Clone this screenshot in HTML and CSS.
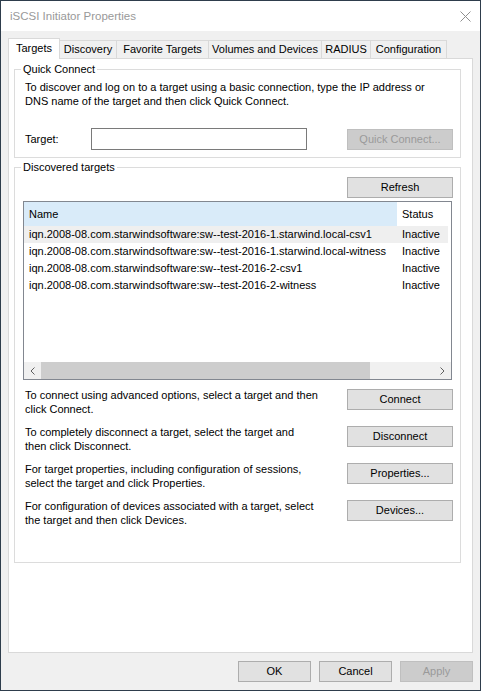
FILE: index.html
```html
<!DOCTYPE html>
<html>
<head>
<meta charset="utf-8">
<title>iSCSI Initiator Properties</title>
<link rel="stylesheet" href="styles.css">
</head>
<body>
<div class="window">
  <header class="titlebar">
    <span class="title">iSCSI Initiator Properties</span>
    <svg class="close" width="11" height="11" viewBox="0 0 11 11"><path d="M0.5 0.5L10.5 10.5M10.5 0.5L0.5 10.5" stroke="#8f8f8f" stroke-width="1" fill="none"/></svg>
  </header>
  <div class="body">
    <nav class="tabs">
      <div class="tab active t-targets">Targets</div>
      <div class="tab t-discovery">Discovery</div>
      <div class="tab t-favorite">Favorite Targets</div>
      <div class="tab t-volumes">Volumes and Devices</div>
      <div class="tab t-radius">RADIUS</div>
      <div class="tab t-config">Configuration</div>
    </nav>
    <main class="panel">
      <section class="group qc">
        <div class="group-title">Quick Connect</div>
        <p class="desc">To discover and log on to a target using a basic connection, type the IP address or<br>DNS name of the target and then click Quick Connect.</p>
        <div class="target-row">
          <span class="target-label">Target:</span>
          <div class="input"></div>
          <button class="btn disabled">Quick Connect...</button>
        </div>
      </section>
      <section class="group dt">
        <div class="group-title">Discovered targets</div>
        <button class="btn refresh">Refresh</button>
        <div class="list">
          <div class="list-head">
            <div class="col-name">Name</div>
            <div class="col-status">Status</div>
          </div>
          <div class="list-row hot">
            <div class="col-name">iqn.2008-08.com.starwindsoftware:sw--test-2016-1.starwind.local-csv1</div>
            <div class="col-status">Inactive</div>
          </div>
          <div class="list-row">
            <div class="col-name">iqn.2008-08.com.starwindsoftware:sw--test-2016-1.starwind.local-witness</div>
            <div class="col-status">Inactive</div>
          </div>
          <div class="list-row">
            <div class="col-name">iqn.2008-08.com.starwindsoftware:sw--test-2016-2-csv1</div>
            <div class="col-status">Inactive</div>
          </div>
          <div class="list-row">
            <div class="col-name">iqn.2008-08.com.starwindsoftware:sw--test-2016-2-witness</div>
            <div class="col-status">Inactive</div>
          </div>
          <div class="list-fill"></div>
          <div class="hscroll">
            <span class="sb-arrow"><svg width="5" height="8" viewBox="0 0 5 8"><polyline points="4.5,0.5 1,4 4.5,7.5" fill="none" stroke="#606060" stroke-width="1"/></svg></span>
            <div class="sb-track"><div class="sb-thumb"></div></div>
            <span class="sb-arrow"><svg width="5" height="8" viewBox="0 0 5 8"><polyline points="0.5,0.5 4,4 0.5,7.5" fill="none" stroke="#606060" stroke-width="1"/></svg></span>
          </div>
        </div>
        <div class="actions">
          <div class="action">
            <p>To connect using advanced options, select a target and then<br>click Connect.</p>
            <button class="btn">Connect</button>
          </div>
          <div class="action">
            <p>To completely disconnect a target, select the target and<br>then click Disconnect.</p>
            <button class="btn">Disconnect</button>
          </div>
          <div class="action">
            <p>For target properties, including configuration of sessions,<br>select the target and click Properties.</p>
            <button class="btn">Properties...</button>
          </div>
          <div class="action">
            <p>For configuration of devices associated with a target, select<br>the target and then click Devices.</p>
            <button class="btn">Devices...</button>
          </div>
        </div>
      </section>
    </main>
    <footer class="footer">
      <button class="btn small">OK</button>
      <button class="btn small">Cancel</button>
      <button class="btn small disabled">Apply</button>
    </footer>
  </div>
</div>
</body>
</html>
```

FILE: styles.css
```css
* { box-sizing: border-box; }

body {
  margin: 0;
  font-family: "Liberation Sans", Arial, sans-serif;
  font-size: 11px;
  color: #000;
}

.window {
  width: 481px;
  height: 691px;
  border: 1px solid #2e3d4c;
  background: #f0f0f0;
  display: flex;
  flex-direction: column;
}

.titlebar {
  height: 30px;
  flex: none;
  background: #fff;
  display: flex;
  align-items: center;
  justify-content: space-between;
  padding: 0 9px 0 9px;
}

.title {
  font-size: 11.5px;
  color: #999;
}

.close { display: block; }

.body {
  flex: 1;
  min-height: 0;
  display: flex;
  flex-direction: column;
  padding: 7px 7px 0 7px;
}

.tabs {
  display: flex;
  align-items: flex-end;
  height: 21px;
  flex: none;
  margin-bottom: -1px;
  position: relative;
  z-index: 1;
}

.tab {
  height: 18px;
  margin-bottom: 1px;
  margin-left: -1px;
  border: 1px solid #d9d9d9;
  border-bottom: none;
  background: #f0f0f0;
  line-height: 17px;
  text-align: center;
  white-space: nowrap;
}

.tab.active {
  height: 21px;
  margin-bottom: 0;
  margin-left: 0;
  background: #fff;
  line-height: 19px;
}

.t-targets { width: 52px; }
.t-discovery { width: 58px; }
.t-favorite { width: 93px; }
.t-volumes { width: 114px; }
.t-radius { width: 50px; }
.t-config { width: 77px; }

.panel {
  flex: 1;
  min-height: 0;
  background: #fff;
  border: 1px solid #d9d9d9;
  padding: 10px 11px 0 5px;
  display: flex;
  flex-direction: column;
}

.group {
  border: 1px solid #dcdcdc;
  padding: 0 7px 7px 10px;
  display: flex;
  flex-direction: column;
}

.group-title {
  align-self: flex-start;
  margin: -7px 0 0 -4px;
  padding: 0 2px;
  background: #fff;
  line-height: 13px;
}

.desc {
  margin: 4px 0 0;
  line-height: 14px;
  white-space: nowrap;
}

.target-row {
  display: flex;
  align-items: center;
  margin-top: 20px;
}

.target-label { width: 66px; }

.input {
  width: 216px;
  height: 22px;
  border: 1px solid #7a7a7a;
  background: #fff;
}

.btn {
  width: 106px;
  height: 21px;
  padding: 0;
  border: 1px solid #adadad;
  background: #e1e1e1;
  font: inherit;
  color: #000;
  line-height: 19px;
  text-align: center;
}

.btn.disabled {
  background: #cccccc;
  border-color: #bfbfbf;
  color: #9a9a9a;
}

.btn.small { width: 73px; }

.target-row .btn { margin-left: auto; }

.dt {
  margin-top: 9px;
  padding-bottom: 35px;
}

.refresh {
  align-self: flex-end;
  margin-top: 3px;
}

.list {
  margin: 3px 1px 0 -2px;
  height: 179px;
  border: 1px solid #828790;
  background: #fff;
  display: flex;
  flex-direction: column;
  overflow: hidden;
}

.list-head {
  display: flex;
  flex: none;
  height: 24px;
  line-height: 24px;
}

.col-name {
  width: 373px;
  flex: none;
  padding-left: 5px;
  overflow: hidden;
  white-space: nowrap;
}

.col-status {
  width: 51px;
  flex: none;
  padding-left: 5px;
  overflow: hidden;
  white-space: nowrap;
}

.list-head .col-name { background: #d9ebf9; }

.list-row {
  display: flex;
  flex: none;
  height: 17px;
  line-height: 17px;
  width: 424px;
}

.list-row.hot { background: #efefef; }

.list-fill { flex: 1; }

.hscroll {
  display: flex;
  flex: none;
  height: 17px;
  background: #f0f0f0;
}

.sb-arrow {
  width: 17px;
  flex: none;
  display: flex;
  align-items: center;
  justify-content: center;
}

.sb-arrow svg { display: block; }

.sb-track {
  flex: 1;
  display: flex;
}

.sb-thumb {
  width: 329px;
  background: #cdcdcd;
}

.actions {
  margin-top: 8px;
  display: flex;
  flex-direction: column;
  gap: 9px;
}

.action {
  display: flex;
  align-items: flex-start;
  justify-content: space-between;
  height: 28px;
}

.action p {
  margin: 0;
  line-height: 14px;
  white-space: nowrap;
}

.action .btn { margin-top: 1px; }

.footer {
  height: 37px;
  flex: none;
  display: flex;
  justify-content: flex-end;
  gap: 8px;
  padding-top: 8px;
}
```
